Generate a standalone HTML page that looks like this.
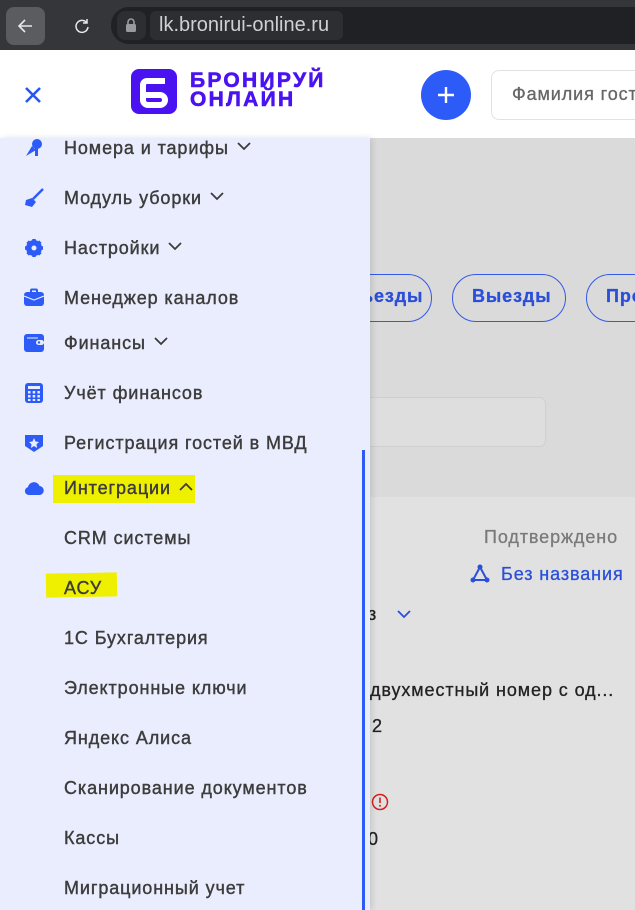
<!DOCTYPE html>
<html><head><meta charset="utf-8"><style>
*{margin:0;padding:0;box-sizing:border-box}
body{width:635px;height:910px;overflow:hidden;position:relative;font-family:"Liberation Sans","DejaVu Sans",sans-serif;background:#e1e1e1}
.a{position:absolute;white-space:nowrap}
.t{position:absolute;left:64px;font-size:18px;letter-spacing:0.9px;color:#3c3c3c;line-height:20px;white-space:nowrap;-webkit-text-stroke:0.4px #3c3c3c}
.ic{position:absolute;left:24px;width:20px;height:20px}
.chev{display:inline-block;margin-left:8px;vertical-align:3px}
.c{letter-spacing:0.9px;font-size:18px;-webkit-text-stroke:0.3px currentColor}
</style></head><body>
<!-- browser bar -->
<div class="a" style="left:0;top:0;width:635px;height:50px;background:#35363a"></div>
<div class="a" style="left:6px;top:7px;width:39px;height:38px;border-radius:8px;background:#5b5c60"></div>
<svg class="a" style="left:15px;top:16px" width="20" height="20" viewBox="0 0 20 20"><path d="M17 10H4M10 4L4 10L10 16" stroke="#e8e8e8" stroke-width="1.6" fill="none"/></svg>
<svg class="a" style="left:72px;top:16px" width="20" height="20" viewBox="0 0 20 20"><path d="M15 7A6 6 0 1 0 16 11M15 3V7H11" stroke="#e8e8e8" stroke-width="1.5" fill="none"/></svg>
<div class="a" style="left:111px;top:7px;width:524px;height:37px;border-radius:18px 0 0 18px;background:#202124"></div>
<div class="a" style="left:117px;top:11px;width:29px;height:29px;border-radius:8px;background:#2d2e31"></div>
<svg class="a" style="left:125px;top:17px" width="12" height="16" viewBox="0 0 12 16"><path d="M3 7V5a3 3 0 0 1 6 0v2" stroke="#9a9a9e" stroke-width="1.6" fill="none"/><rect x="1" y="7" width="10" height="8" rx="1.5" fill="#9a9a9e"/></svg>
<div class="a" style="left:150px;top:11px;width:193px;height:29px;border-radius:6px;background:#2d2e31"></div>
<div class="a" style="left:159px;top:14px;font-size:20px;color:#cfd0d3">lk.bronirui-online.ru</div>
<!-- header -->
<div class="a" style="left:0;top:50px;width:635px;height:88px;background:#fff"></div>
<svg class="a" style="left:24px;top:86px" width="18" height="18" viewBox="0 0 18 18"><path d="M2 2L16 16M16 2L2 16" stroke="#2855f6" stroke-width="2.6"/></svg>
<div class="a" style="left:131px;top:69px;width:46px;height:45px;border-radius:8px;background:#4a12f0"></div>
<svg class="a" style="left:131px;top:69px" width="46" height="45" viewBox="0 0 46 45"><path d="M34 12H16a4 4 0 0 0-4 4v15a5 5 0 0 0 5 5h12a5 5 0 0 0 0-10H12" stroke="#fff" stroke-width="6" fill="none"/></svg>
<div class="a" style="left:190px;top:71px;font-size:21px;font-weight:bold;color:#4a12f0;line-height:19px;letter-spacing:2.3px;-webkit-text-stroke:0.6px #4a12f0">БРОНИРУЙ<br>ОНЛАЙН</div>
<div class="a" style="left:421px;top:70px;width:50px;height:50px;border-radius:50%;background:#2c5bf7"></div>
<svg class="a" style="left:436px;top:85px" width="20" height="20" viewBox="0 0 20 20"><path d="M10 2V18M2 10H18" stroke="#fff" stroke-width="2.4"/></svg>
<div class="a" style="left:491px;top:70px;width:160px;height:50px;border-radius:8px;border:1px solid #e2e2e2;background:#fff"></div>
<div class="a c" style="left:512px;top:84px;color:#666">Фамилия гост</div>
<!-- right content -->
<div class="a" style="left:370px;top:138px;width:265px;height:359px;background:#dadada"></div>
<div class="a" style="left:330px;top:274px;width:102px;height:48px;border-radius:24px;border:1.5px solid #3558e8"></div>
<div class="a c" style="left:362px;top:286px;font-weight:bold;color:#2b4fd9">ьезды</div>
<div class="a" style="left:452px;top:274px;width:114px;height:48px;border-radius:24px;border:1.5px solid #3558e8"></div>
<div class="a c" style="left:472px;top:286px;font-weight:bold;color:#2b4fd9">Выезды</div>
<div class="a" style="left:586px;top:274px;width:120px;height:48px;border-radius:24px;border:1.5px solid #3558e8"></div>
<div class="a c" style="left:606px;top:286px;font-weight:bold;color:#2b4fd9">Про</div>
<div class="a" style="left:300px;top:397px;width:246px;height:50px;border-radius:7px;border:1px solid #cfcfcf;background:#dedede"></div>
<div class="a c" style="left:484px;top:527px;color:#7a7a7a">Подтверждено</div>
<svg class="a" style="left:470px;top:564px" width="20" height="20" viewBox="0 0 20 20"><path d="M10 3L3 16H17Z" stroke="#2b4fd9" stroke-width="2" fill="none"/><circle cx="10" cy="3" r="2.5" fill="#2b4fd9"/><circle cx="3" cy="16" r="2.5" fill="#2b4fd9"/><circle cx="17" cy="16" r="2.5" fill="#2b4fd9"/></svg>
<div class="a c" style="left:501px;top:564px;color:#2b4fd9">Без названия</div>
<div class="a c" style="left:368px;top:604px;color:#222">з</div>
<svg class="a" style="left:396px;top:608px" width="16" height="12" viewBox="0 0 16 12"><path d="M2 3L8 9L14 3" stroke="#2b4fd9" stroke-width="1.8" fill="none"/></svg>
<div class="a c" style="left:370px;top:680px;color:#222">двухместный номер с од...</div>
<div class="a c" style="left:372px;top:716px;color:#222">2</div>
<svg class="a" style="left:370px;top:792px" width="20" height="20" viewBox="0 0 20 20"><circle cx="10" cy="10" r="7.5" stroke="#d62020" stroke-width="1.5" fill="none"/><path d="M10 5.5V11" stroke="#d62020" stroke-width="1.6"/><circle cx="10" cy="13.8" r="1" fill="#d62020"/></svg>
<div class="a c" style="left:368px;top:829px;color:#222">0</div>
<!-- sidebar -->
<div class="a" style="left:0;top:138px;width:370px;height:772px;background:#eaedfd;box-shadow:2px 0 6px rgba(0,0,0,0.12)"></div>
<div class="a" style="left:362px;top:450px;width:3px;height:460px;background:#2c5bf7"></div>
<!-- highlights -->
<div class="a" style="left:53px;top:475px;width:142px;height:28px;background:#eef000"></div>
<div class="a" style="left:46px;top:573px;width:71px;height:24px;background:#eef000;transform:rotate(-1deg)"></div>
<!-- icons -->
<svg class="ic" style="top:138px" viewBox="0 0 20 20"><circle cx="13" cy="6" r="5" fill="#2c5bf7"/><rect x="11" y="9" width="3" height="9" fill="#2c5bf7"/><path d="M2 18L8 8L12 12Z" fill="#2c5bf7"/></svg>
<svg class="ic" style="top:188px" viewBox="0 0 20 20"><path d="M19 1L9 11" stroke="#2c5bf7" stroke-width="2.4"/><path d="M8 10L12 14L8 19L1 17L2 12Z" fill="#2c5bf7"/></svg>
<svg class="ic" style="top:238px" viewBox="0 0 20 20"><circle cx="10" cy="10" r="6" fill="none" stroke="#2c5bf7" stroke-width="4"/><path d="M10 1V19M1 10H19M3.6 3.6L16.4 16.4M16.4 3.6L3.6 16.4" stroke="#2c5bf7" stroke-width="3.5"/><circle cx="10" cy="10" r="2.5" fill="#eaedfd"/></svg>
<svg class="ic" style="top:288px" viewBox="0 0 20 20"><rect x="7" y="1.5" width="6" height="4" rx="1" fill="none" stroke="#2c5bf7" stroke-width="2"/><rect x="0" y="4" width="20" height="14" rx="3" fill="#2c5bf7"/><path d="M0 8L10 12L20 8" stroke="#eaedfd" stroke-width="1.2" fill="none"/></svg>
<svg class="ic" style="top:333px" viewBox="0 0 20 20"><rect x="0" y="1" width="20" height="18" rx="3" fill="#2c5bf7"/><rect x="12" y="7" width="8" height="5" rx="2.5" fill="#eaedfd"/><circle cx="15" cy="9.5" r="1.2" fill="#2c5bf7"/><path d="M3 5H14" stroke="#eaedfd" stroke-width="1"/></svg>
<svg class="ic" style="top:383px" viewBox="0 0 20 20"><rect x="1" y="0" width="18" height="20" rx="3" fill="#2c5bf7"/><rect x="4" y="3" width="12" height="3" fill="#eaedfd"/><g fill="#eaedfd"><rect x="4" y="8" width="2.5" height="2.5"/><rect x="8.7" y="8" width="2.5" height="2.5"/><rect x="13.4" y="8" width="2.5" height="2.5"/><rect x="4" y="12" width="2.5" height="2.5"/><rect x="8.7" y="12" width="2.5" height="2.5"/><rect x="13.4" y="12" width="2.5" height="2.5"/><rect x="4" y="16" width="2.5" height="2"/><rect x="8.7" y="16" width="2.5" height="2"/><rect x="13.4" y="16" width="2.5" height="2"/></g></svg>
<svg class="ic" style="top:433px" viewBox="0 0 20 20"><path d="M1 2H19V13L10 19L1 13Z" fill="#2c5bf7"/><path d="M10 5L11.5 8.5L15 9L12.5 11.3L13 15L10 13L7 15L7.5 11.3L5 9L8.5 8.5Z" fill="#eaedfd"/></svg>
<svg class="ic" style="top:478px" viewBox="0 0 20 20"><path d="M5 17a4 4 0 0 1-1-7.9A6 6 0 0 1 15.5 8 4.5 4.5 0 0 1 15 17Z" fill="#2c5bf7"/></svg>
<!-- labels -->
<div class="t" style="top:138px">Номера и тарифы<svg class="chev" width="14" height="9" viewBox="0 0 14 9"><path d="M1 1L7 7L13 1" stroke="#3c3c3c" stroke-width="1.8" fill="none"/></svg></div>
<div class="t" style="top:188px">Модуль уборки<svg class="chev" width="14" height="9" viewBox="0 0 14 9"><path d="M1 1L7 7L13 1" stroke="#3c3c3c" stroke-width="1.8" fill="none"/></svg></div>
<div class="t" style="top:238px">Настройки<svg class="chev" width="14" height="9" viewBox="0 0 14 9"><path d="M1 1L7 7L13 1" stroke="#3c3c3c" stroke-width="1.8" fill="none"/></svg></div>
<div class="t" style="top:288px">Менеджер каналов</div>
<div class="t" style="top:333px">Финансы<svg class="chev" width="14" height="9" viewBox="0 0 14 9"><path d="M1 1L7 7L13 1" stroke="#3c3c3c" stroke-width="1.8" fill="none"/></svg></div>
<div class="t" style="top:383px">Учёт финансов</div>
<div class="t" style="top:433px">Регистрация гостей в МВД</div>
<div class="t" style="top:478px">Интеграции<svg class="chev" width="14" height="9" viewBox="0 0 14 9"><path d="M1 8L7 2L13 8" stroke="#3c3c3c" stroke-width="1.8" fill="none"/></svg></div>
<div class="t" style="top:528px">CRM системы</div>
<div class="t" style="top:578px">АСУ</div>
<div class="t" style="top:628px">1С Бухгалтерия</div>
<div class="t" style="top:678px">Электронные ключи</div>
<div class="t" style="top:728px">Яндекс Алиса</div>
<div class="t" style="top:778px">Сканирование документов</div>
<div class="t" style="top:828px">Кассы</div>
<div class="t" style="top:878px">Миграционный учет</div>
</body></html>
